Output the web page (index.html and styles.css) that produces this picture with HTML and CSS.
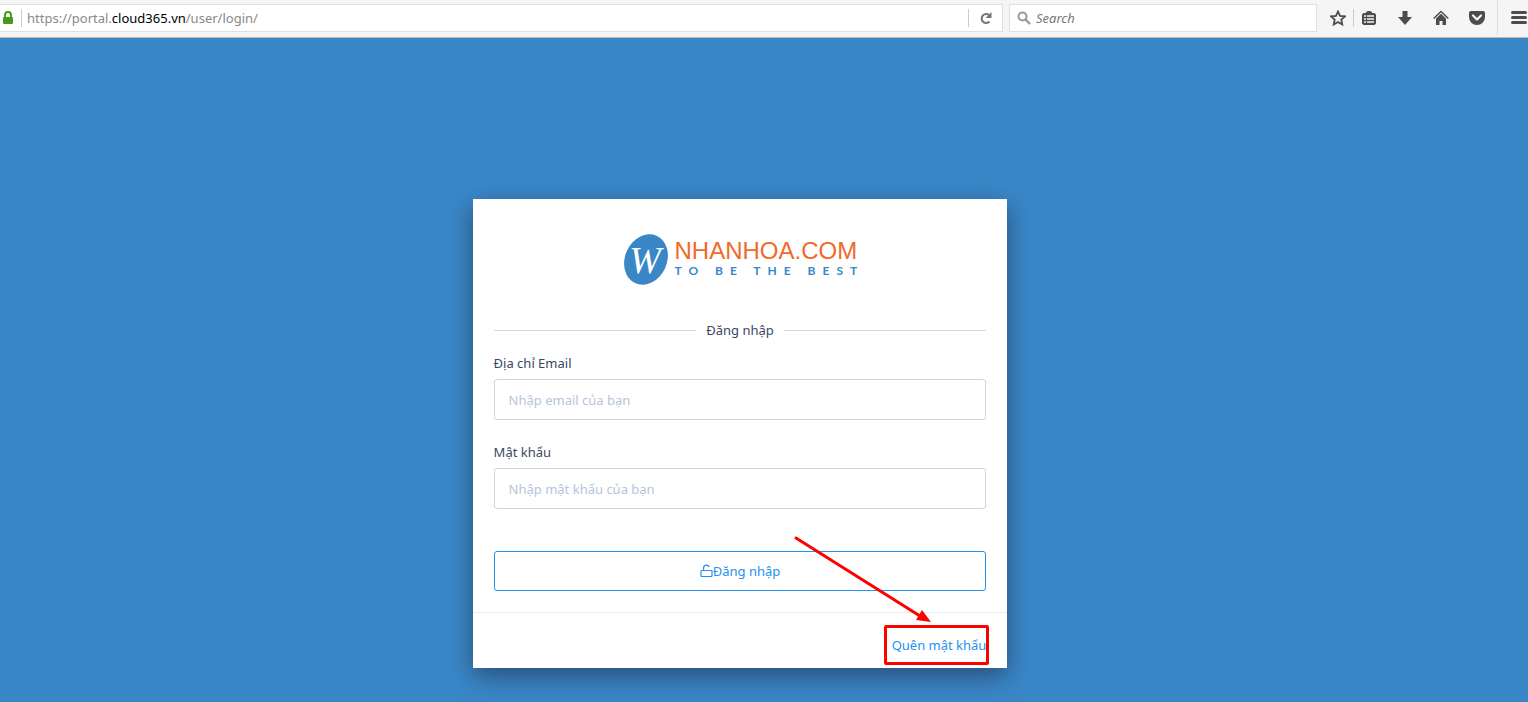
FILE: index.html
```
<!DOCTYPE html>
<html lang="vi">
<head>
<meta charset="utf-8">
<title>Đăng nhập</title>
<link rel="stylesheet" href="styles.css">
</head>
<body>
<header class="toolbar">
  <div class="address">
    <svg class="lock" width="12" height="14" viewBox="0 0 12 14"><path d="M3 6V4a3 3 0 0 1 6 0v2" fill="none" stroke="#4a9a1f" stroke-width="2"/><rect x="1" y="6" width="10" height="7" rx="1" fill="#4a9a1f"/></svg>
    <span class="divider"></span>
    <span class="url">https://portal.<b>cloud365.vn</b>/user/login/</span>
    <span class="divider"></span>
    <button class="icon reload" type="button" aria-label="Reload"><svg width="14" height="14" viewBox="0 0 14 14"><path d="M10.500 4.500A4.500 4.500 0 1 0 10.500 10.500" fill="none" stroke="#777" stroke-width="2"/><path d="M12.500 1v6H6.500z" fill="#777"/></svg></button>
  </div>
  <label class="search">
    <svg width="14" height="14" viewBox="0 0 14 14"><circle cx="5.500" cy="5.500" r="4" fill="none" stroke="#999" stroke-width="2"/><path d="M8.500 8.500l4.500 4.500" stroke="#999" stroke-width="2.400"/></svg>
    <input type="search" placeholder="Search" aria-label="Search">
  </label>
  <nav class="tools">
    <button class="icon" type="button" aria-label="Bookmark"><svg width="16" height="16" viewBox="0 0 16 16"><path d="M8 1.500l2 4.400 5 .5-3.700 3.300 1 4.800L8 12l-4.300 2.500 1-4.800L1 6.400l5-.5z" fill="none" stroke="#4c4c4c" stroke-width="1.800"/></svg></button>
    <span class="divider"></span>
    <button class="icon" type="button" aria-label="Reading list"><svg width="16" height="16" viewBox="0 0 16 16"><path d="M5 3V2l2-1h2l2 1v1h2.500L15 4.500v9L13.500 15h-11L1 13.500v-9L2.500 3z" fill="#4c4c4c"/><path d="M3 6h2m1 0h7M3 9h2m1 0h7M3 12h2m1 0h7" stroke="#f5f5f5" stroke-width="1.500"/></svg></button>
    <button class="icon" type="button" aria-label="Downloads"><svg width="16" height="16" viewBox="0 0 16 16"><path d="M5.500 1h5v6H15l-7 8-7-8h4.500z" fill="#4c4c4c"/></svg></button>
    <button class="icon" type="button" aria-label="Home"><svg width="16" height="16" viewBox="0 0 16 16"><path d="M.700 8.500L8 1.500l7.300 7" fill="none" stroke="#4c4c4c" stroke-width="1.500"/><path d="M3 8.500l5-4.800 5 4.800V15H9.500v-4h-3v4H3z" fill="#4c4c4c"/></svg></button>
    <button class="icon" type="button" aria-label="Pocket"><svg width="16" height="16" viewBox="0 0 16 16"><path d="M2 1h12q2 0 2 2v4a8 8 0 0 1-16 0V3q0-2 2-2z" fill="#4c4c4c"/><path d="M4 5.500l4 4 4-4" fill="none" stroke="#f5f5f5" stroke-width="2.200" stroke-linecap="round" stroke-linejoin="round"/></svg></button>
    <button class="icon menu" type="button" aria-label="Menu"><svg width="16" height="16" viewBox="0 0 16 16"><path d="M1.500 2.500h13M1.500 7.500h13M1.500 12.500h13" stroke="#4c4c4c" stroke-width="3" stroke-linecap="round"/></svg></button>
  </nav>
</header>
<main class="page">
  <form class="card">
    <div class="card-body">
      <div class="logo">
        <svg width="46" height="52" viewBox="0 0 46 52"><ellipse cx="23" cy="25.500" rx="21" ry="26" transform="rotate(24 23 25.500)" fill="#3a87c8"/><text class="logo-letter" x="22" y="39" text-anchor="middle">W</text></svg>
        <div class="logo-words"><span class="logo-name">NHANHOA.COM</span><span class="logo-tagline">TO BE THE BEST</span></div>
      </div>
      <h1 class="title">Đăng nhập</h1>
      <div class="field"><label for="email">Địa chỉ Email</label><input id="email" type="email" placeholder="Nhập email của bạn"></div>
      <div class="field"><label for="password">Mật khẩu</label><input id="password" type="password" placeholder="Nhập mật khẩu của bạn"></div>
      <button class="submit" type="submit"><svg width="13" height="14" viewBox="0 0 13 14"><path d="M1.500 6.500h10l.5.500v5l-.5.500h-10l-.5-.5V7zM3.500 6V4a3 3 0 0 1 5.800-1" fill="none" stroke="#2492ee" stroke-width="1.200"/></svg>Đăng nhập</button>
    </div>
    <footer class="card-footer">
      <span class="highlight"><a href="#forgot">Quên mật khẩu</a>
        <svg class="arrow" width="138" height="90" viewBox="0 0 138 90"><path d="M2 3l124 78" stroke="#f00" stroke-width="3" stroke-linecap="round"/><path d="M137 87l-15-2 6-10z" fill="#f00"/></svg>
      </span>
    </footer>
  </form>
</main>
</body>
</html>
```
FILE: styles.css
```
* { box-sizing: border-box; }
body {
  margin: 0;
  min-height: 100vh;
  display: flex;
  flex-direction: column;
  background: #3a87c8;
  font: 13px/20px "Noto Sans", "Open Sans", sans-serif;
  color: #3b4863;
}
svg { flex: none; display: block; }
button, input { font: inherit; }
.toolbar {
  display: flex;
  align-items: center;
  height: 38px;
  padding-bottom: 2px;
  background: #f5f5f5;
  border-bottom: 1px solid #b8bcc0;
}
.address, .search {
  display: flex;
  align-items: center;
  height: 28px;
  background: #fff;
  border: 1px solid #e0e0e0;
}
.address { flex: 1; border-left: 0; padding-left: 2px; }
.lock { margin-right: 7px; }
.divider { width: 1px; height: 18px; background: #ccc; }
.url { flex: 1; padding-left: 5px; color: #888; }
.url b { font-weight: 400; color: #000; }
.icon {
  display: flex;
  align-items: center;
  justify-content: center;
  width: 36px;
  height: 34px;
  padding: 0;
  border: 0;
  background: none;
}
.reload { width: 33px; height: 26px; }
.search { width: 308px; margin-left: 6px; padding-left: 7px; gap: 5px; }
.search input {
  flex: 1;
  min-width: 0;
  padding: 0;
  border: 0;
  outline: 0;
  background: none;
  font-style: italic;
}
.search input::placeholder { color: #777; }
.tools { display: flex; align-items: center; padding-left: 5px; }
.tools .divider { margin: 0 -3px 0 -1px; }
.tools .icon:first-child { width: 32px; }
.tools .menu { width: 31px; border-left: 1px solid #ddd; padding-left: 12px; margin-left: 2px; }
.page { flex: 1; padding: 161px 48px 34px 0; }
.card {
  width: 35vw;
  min-width: 320px;
  margin: 0 auto;
  background: #fff;
  box-shadow: 0 8px 24px rgba(30, 40, 60, 0.6);
}
.card-body { padding: 35px 21px 21px; }
.logo { display: flex; justify-content: center; gap: 5px; margin-bottom: 34px; }
.logo-letter { font: italic 38px "Liberation Serif", serif; fill: #fff; }
.logo-words { display: flex; flex-direction: column; padding-top: 4px; width: 182px; white-space: nowrap; }
.logo-name { font: 24px/26px "Liberation Sans", Arial, sans-serif; color: #f06a2a; }
.logo-tagline { font: 700 12px/14px Lato, sans-serif; color: #3a87c8; letter-spacing: 7px; }
.title {
  display: flex;
  align-items: center;
  gap: 10px;
  margin: 0 0 13px;
  font-size: 13px;
  font-weight: 400;
}
.title::before, .title::after { content: ""; flex: 1; height: 1px; background: #d5d9dd; }
.field { display: flex; flex-direction: column; gap: 6px; margin-bottom: 22px; }
.field input {
  height: 41px;
  padding: 0 14px;
  border: 1px solid #cad4e4;
  border-radius: 3px;
  outline: 0;
  color: inherit;
}
.field input::placeholder { color: #b7c4dc; }
.submit {
  display: flex;
  align-items: center;
  justify-content: center;
  width: 100%;
  height: 40px;
  margin-top: 42px;
  border: 1px solid #2492ee;
  border-radius: 3px;
  background: #fff;
  color: #2492ee;
}
.card-footer {
  display: flex;
  justify-content: flex-end;
  padding: 12px 18px 3px;
  border-top: 1px solid #e9ecef;
}
.highlight {
  position: relative;
  display: flex;
  align-items: center;
  height: 40px;
  padding-left: 5px;
  border: 3px solid #f00;
  border-radius: 2px;
}
.highlight a { color: #2492ee; text-decoration: none; }
.arrow { position: absolute; right: 54px; bottom: 37px; pointer-events: none; }
```
